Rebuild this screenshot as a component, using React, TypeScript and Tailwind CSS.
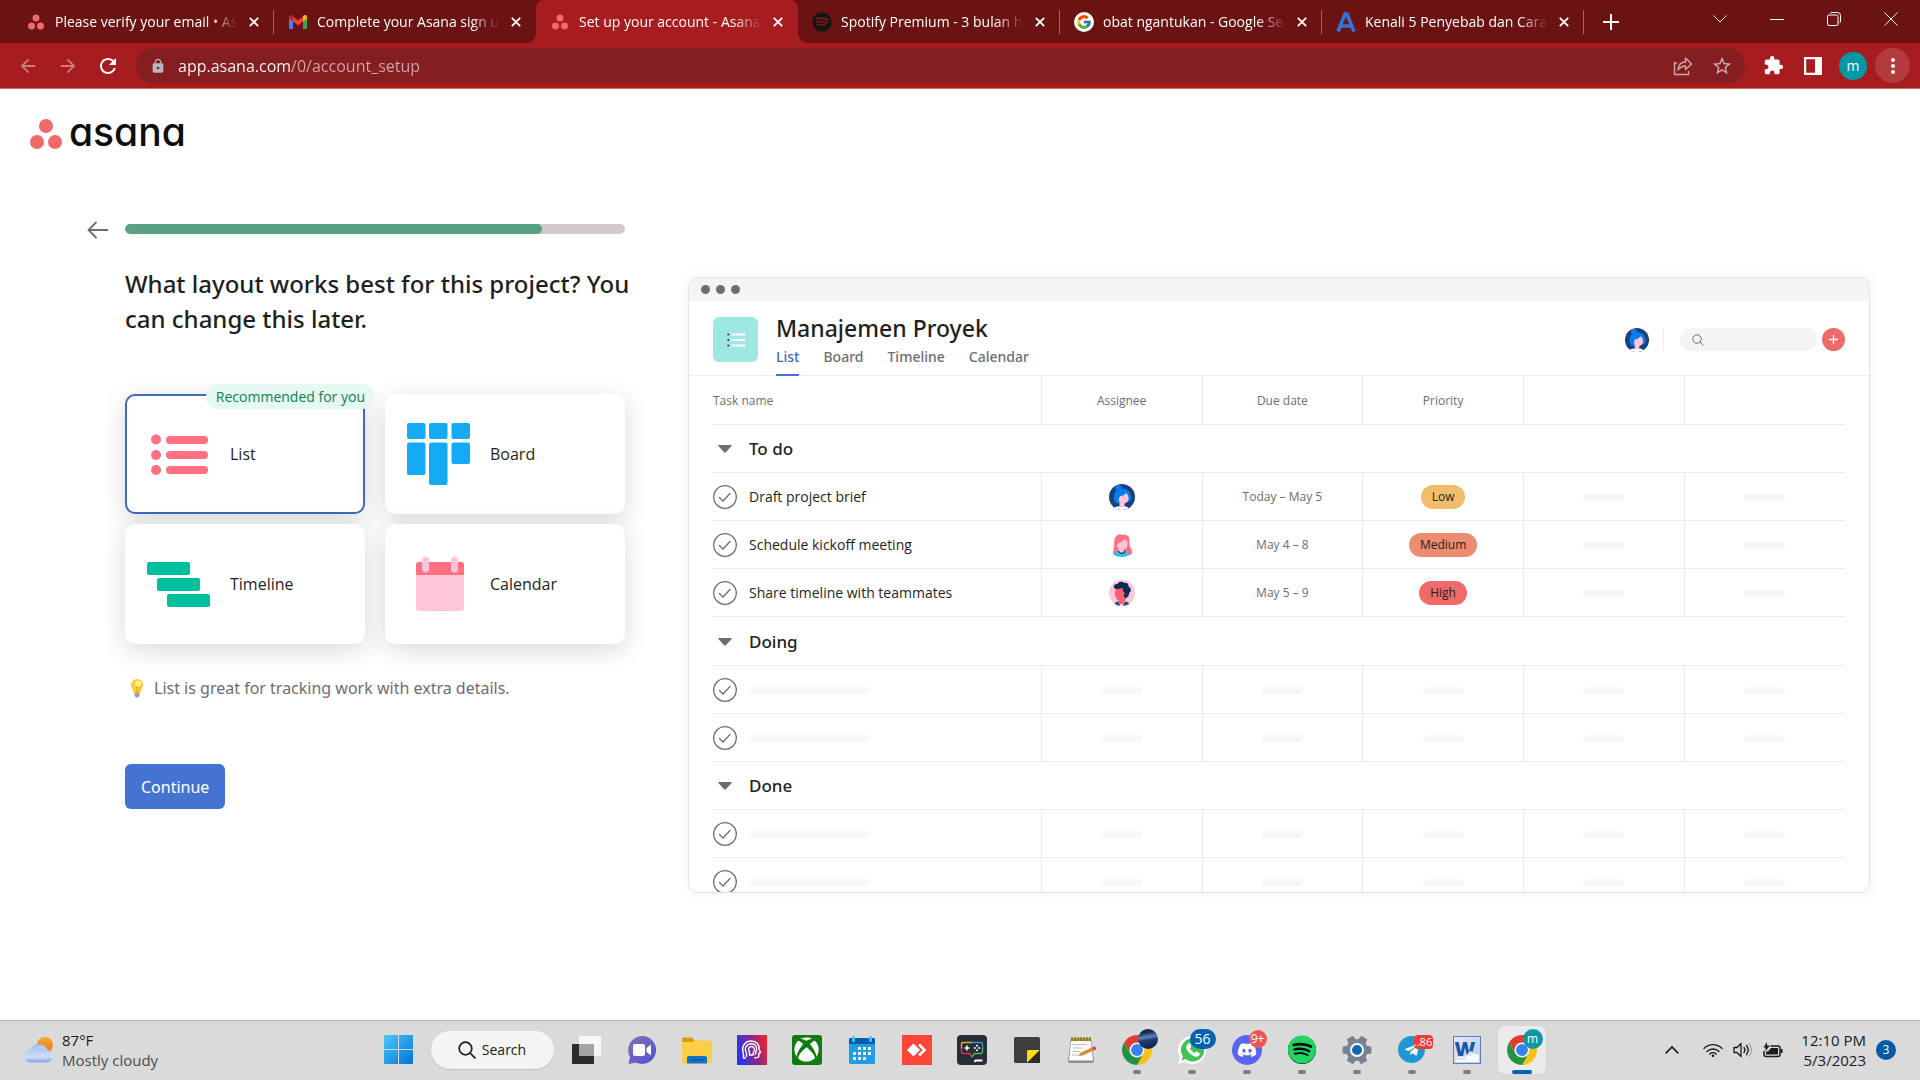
import { useState, type ReactNode } from "react";
import { FcGoogle } from "react-icons/fc";
import { FaDiscord, FaSpotify, FaTelegramPlane, FaXbox } from "react-icons/fa";
import { MdArrowBack, MdArrowForward, MdExtension, MdLock, MdMoreVert, MdRefresh, MdSettings, MdStarOutline } from "react-icons/md";

/* ---------- shared drawings ---------- */

function AsanaDots({ className }: { className: string }) {
  return (
    <svg viewBox="0 0 32 30" className={className} fill="#f06a6a" aria-hidden="true">
      <circle cx="16" cy="7" r="7" />
      <circle cx="7" cy="23" r="7" />
      <circle cx="25" cy="23" r="7" />
    </svg>
  );
}

function ChromeLogo() {
  return (
    <svg viewBox="0 0 48 48" className="size-[30px]" aria-hidden="true">
      <circle cx="24" cy="24" r="12" fill="#fff" />
      <path fill="#e33b2e" d="M24 12H44.78A24 24 0 0 0 3.22 12L13.6 30A12 12 0 0 1 24 12Z" />
      <path fill="#fbc116" d="M34.39 30L24 48A24 24 0 0 0 44.78 12H24A12 12 0 0 1 34.39 30Z" />
      <path fill="#229342" d="M13.6 30L3.22 12A24 24 0 0 0 24 48L34.39 30A12 12 0 0 1 13.6 30Z" />
      <circle cx="24" cy="24" r="9.5" fill="#3b7ff0" />
    </svg>
  );
}

function BlueAvatar({ className }: { className: string }) {
  return (
    <svg viewBox="0 0 26 26" className={className} aria-hidden="true">
      <clipPath id="blueAvatarClip">
        <circle cx="13" cy="13" r="13" />
      </clipPath>
      <g clipPath="url(#blueAvatarClip)">
        <rect width="26" height="26" fill="#17407c" />
        <circle cx="9.5" cy="4" r="3.2" fill="#0b7bea" />
        <path d="M5 14C4.500 8 8 4.500 13 4.500S21 7 22 12c1 2 .5 4-2 6l-8 1C7 20 5 18 5 14Z" fill="#0b7bea" />
        <path d="M11 12c2 .5 4.500-1 6-3 2 1.500 3 4 2.500 6.500-.4 2-2 3.500-4 4V24h-5v-6c-1-1.500-1-4 .5-5.500Z" fill="#ffc6da" />
        <path d="M4 26c0-2.500 3-3.500 6-3.800 2 1.500 4 1.500 6 0 2.500.3 4 1.500 4 3.800Z" fill="#fff" />
      </g>
    </svg>
  );
}

function RedAvatar() {
  return (
    <svg viewBox="0 0 26 26" className="size-[26px]" aria-hidden="true">
      <path d="M5 23C3 22 4.500 19 5 16 5.500 13 4.500 10 6 6c1.500-3.500 5-4.500 7-3 3-1 7 0 7.500 4 .4 3-.5 6 1 9 2 3 2.500 5 .5 6.500-2 1.500-5 .5-8 .5Z" fill="#ff7082" />
      <path d="M9 11c3-.5 5-2 6-4 2 .5 3.500 2 3.500 5 0 3-1.500 5-4 5.500v3h-5v-4C8 15 8 13 9 11Z" fill="#ffc6da" />
      <path d="M5 23c0-2.500 2-3.500 4.500-4 2 2.500 4.500 2.500 6 0 2.500.3 4 1.500 4.500 4-4 2.600-11 2.600-15 0Z" fill="#25c3f2" />
      <path d="M9.500 19c1.500 3.500 5 3.500 6.500 0" fill="none" stroke="#0d2e5c" strokeWidth="1.200" />
    </svg>
  );
}

function PinkAvatar() {
  return (
    <svg viewBox="0 0 26 26" className="size-[26px]" aria-hidden="true">
      <clipPath id="pinkAvatarClip">
        <circle cx="13" cy="13" r="13" />
      </clipPath>
      <g clipPath="url(#pinkAvatarClip)">
        <rect width="26" height="26" fill="#ffc6da" />
        <path d="M7 7c4 1 8 1 11 3l-1 8-1.500 3v3H9.500v-4c-2 0-2.500-1.500-2.500-3l-1.500-3Z" fill="#f8636b" />
        <path d="M5 8c-1-3 2-4.500 3.500-4C10 1 14 1.500 15 3c3-1 5 1.500 4.500 3.500C22.500 8 22.500 12 20 13c.5 3-2 5-4 5l-1.500-3c2-1 1-3-.5-3.500L13.500 8C10.500 9 7 9.500 5 8Z" fill="#0d2b57" />
        <path d="M5 26c0-3 2-4.500 4.500-4.500L11 26Zm9 0 2-4.500c3 0 4.500 2 4.500 4.500Z" fill="#1b4a8a" />
      </g>
    </svg>
  );
}

/* ---------- browser window ---------- */

function GmailIcon() {
  return (
    <svg viewBox="0 0 18 14" className="h-3.5 w-[18px]" aria-hidden="true">
      <path d="M0 2.500V13a1 1 0 0 0 1 1h3V5Z" fill="#4285f4" />
      <path d="M18 2.500V13a1 1 0 0 1-1 1h-3V5Z" fill="#34a853" />
      <path d="M4 1.500 9 5.500l5-4V6.500L9 10.500 4 6.500Z" fill="#ea4335" />
      <path d="M0 2C0 .3 2-.6 3.300.5L4 1v5.500L0 3.500Z" fill="#c5221f" />
      <path d="M18 2C18 .3 16-.6 14.700.5L14 1v5.500l4-3Z" fill="#fbbc04" />
    </svg>
  );
}

const tabs: { title: string; icon: ReactNode; active?: boolean; line?: boolean }[] = [
  { title: "Please verify your email • Asana", icon: <AsanaDots className="size-4" />, line: true },
  { title: "Complete your Asana sign up", icon: <GmailIcon /> },
  { title: "Set up your account - Asana", icon: <AsanaDots className="size-4" />, active: true },
  {
    title: "Spotify Premium - 3 bulan hanya",
    icon: (
      <span className="flex size-5 items-center justify-center rounded-full bg-[#7a1a1a] text-[#191414]">
        <FaSpotify className="size-5" />
      </span>
    ),
    line: true,
  },
  {
    title: "obat ngantukan - Google Search",
    icon: (
      <span className="flex size-5 items-center justify-center rounded-full bg-white">
        <FcGoogle className="size-4" />
      </span>
    ),
    line: true,
  },
  {
    title: "Kenali 5 Penyebab dan Cara",
    icon: (
      <svg viewBox="0 0 20 20" className="size-5" aria-hidden="true">
        <path d="M2 19.500 9 2h2l7 17.500M5 14h10" fill="none" stroke="#3571d8" strokeWidth="3.600" />
      </svg>
    ),
    line: true,
  },
];

function CloseGlyph() {
  return (
    <svg viewBox="0 0 10 10" className="size-2.5" stroke="currentColor" strokeWidth="1.800" aria-hidden="true">
      <path d="M.8.8l8.400 8.400M9.200.8.8 9.200" />
    </svg>
  );
}

function TabStrip() {
  return (
    <div className="flex h-[43px] items-stretch bg-[#6b1213] pl-3 text-white">
      {tabs.map((tab) => (
        <div
          key={tab.title}
          className={
            tab.active
              ? "relative flex w-[262px] min-w-0 items-center rounded-t-lg bg-[#a71c1e] pr-2.5 pl-3.5"
              : "relative flex w-[262px] min-w-0 items-center pr-2.5 pl-3.5"
          }
        >
          {tab.active && (
            <>
              <span className="absolute bottom-0 -left-2.5 size-2.5 bg-[radial-gradient(circle_at_0_0,transparent_10px,#a71c1e_10px)]" />
              <span className="absolute -right-2.5 bottom-0 size-2.5 bg-[radial-gradient(circle_at_100%_0,transparent_10px,#a71c1e_10px)]" />
            </>
          )}
          <button type="button" className="flex h-full min-w-0 flex-1 items-center gap-[9px] text-left">
            <span className="flex w-5 shrink-0 justify-center">{tab.icon}</span>
            <span className="mr-1.5 block min-w-0 flex-1 overflow-hidden text-sm whitespace-nowrap [mask-image:linear-gradient(to_right,black_84%,transparent)]">
              {tab.title}
            </span>
          </button>
          <button type="button" aria-label={"Close " + tab.title} className="flex size-5 shrink-0 items-center justify-center">
            <CloseGlyph />
          </button>
          {tab.line && <span className="absolute top-2.5 right-0 h-6 w-px bg-[#a56163]" />}
        </div>
      ))}
      <button type="button" aria-label="New tab" className="flex w-[54px] items-center justify-center">
        <svg viewBox="0 0 16 16" className="size-4" stroke="currentColor" strokeWidth="2" aria-hidden="true">
          <path d="M8 0v16M0 8h16" />
        </svg>
      </button>
      <div className="mr-px ml-auto flex h-[38px] [&>button]:flex [&>button]:w-[57px] [&>button]:items-center [&>button]:justify-center [&_svg]:size-3.5">
        <button type="button" aria-label="Search tabs">
          <svg viewBox="0 0 14 14" fill="none" stroke="currentColor" aria-hidden="true">
            <path d="M.5 3.500 7 10l6.500-6.500" />
          </svg>
        </button>
        <button type="button" aria-label="Minimize">
          <svg viewBox="0 0 14 14" stroke="currentColor" aria-hidden="true">
            <path d="M0 7.500h14" />
          </svg>
        </button>
        <button type="button" aria-label="Restore">
          <svg viewBox="0 0 14 14" fill="none" stroke="currentColor" aria-hidden="true">
            <rect x=".5" y="3" width="10.500" height="10.500" rx="1.500" />
            <path d="M3 1.500Q3.500.5 5 .5h5.500q3 0 3 3V9q0 1.500-1 2" />
          </svg>
        </button>
        <button type="button" aria-label="Close window">
          <svg viewBox="0 0 14 14" stroke="currentColor" aria-hidden="true">
            <path d="M.5.5l13 13M13.500.5l-13 13" />
          </svg>
        </button>
      </div>
    </div>
  );
}

function Toolbar() {
  return (
    <div className="flex h-[46px] items-center border-b border-[#c66a6b] bg-[#a71c1e] pr-2.5 pl-2 text-white">
      <button type="button" aria-label="Back" className="flex w-10 justify-center text-[#cf7d7e]">
        <MdArrowBack className="size-[22px]" />
      </button>
      <button type="button" aria-label="Forward" className="flex w-10 justify-center text-[#cf7d7e]">
        <MdArrowForward className="size-[22px]" />
      </button>
      <button type="button" aria-label="Reload" className="flex w-10 justify-center">
        <MdRefresh className="size-6" />
      </button>
      <div className="ml-2 flex h-[35px] min-w-0 flex-1 items-center rounded-full bg-[#841e20] pr-3 pl-3.5">
        <MdLock className="size-4 shrink-0 text-[#b4b9bf]" />
        <input
          type="text"
          aria-label="Address"
          defaultValue="app.asana.com/0/account_setup"
          className="ml-3 min-w-0 flex-1 bg-[linear-gradient(to_right,#ffffff_114px,#d7a5a6_114px)] bg-clip-text text-base text-transparent outline-none"
        />
        <button type="button" aria-label="Share this page" className="flex w-10 justify-center text-[#cfa9aa]">
          <svg viewBox="0 0 20 20" className="size-5" fill="none" stroke="currentColor" strokeWidth="1.400" aria-hidden="true">
            <path d="M4 7H1.500v11.500h14V15" />
            <path d="M5 14c.5-5 3-8 7.500-8V2l6 6-6 5.500V10c-3.500 0-5.500 1.500-7.500 4Z" strokeLinejoin="round" />
          </svg>
        </button>
        <button type="button" aria-label="Bookmark this tab" className="flex w-[30px] justify-end text-[#cfa9aa]">
          <MdStarOutline className="size-[22px]" />
        </button>
      </div>
      <button type="button" aria-label="Extensions" className="ml-2 flex w-10 justify-center">
        <MdExtension className="size-[21px]" />
      </button>
      <button type="button" aria-label="Side panel" className="flex w-10 justify-center">
        <svg viewBox="0 0 18 18" className="size-[18px]" fill="none" stroke="currentColor" strokeWidth="2.200" aria-hidden="true">
          <path d="M1.100 1.100h15.800v15.800H1.100Z" />
          <path d="M13.500 1v16" strokeWidth="5" />
        </svg>
      </button>
      <button type="button" aria-label="Profile" className="mx-1.5 flex size-7 items-center justify-center rounded-full bg-[#0097a7] text-sm leading-none">
        m
      </button>
      <button type="button" aria-label="Menu" className="ml-0.5 flex size-[35px] items-center justify-center rounded-full bg-[#b23b3d]">
        <MdMoreVert className="size-6" />
      </button>
    </div>
  );
}

/* ---------- layout picker ---------- */

const layouts: { name: string; icon: ReactNode }[] = [
  {
    name: "List",
    icon: (
      <g fill="#ff7082">
        <circle cx="9" cy="17.500" r="5" />
        <rect x="19" y="14" width="42" height="8" rx="4" />
        <circle cx="9" cy="33" r="5" />
        <rect x="19" y="29" width="42" height="8" rx="4" />
        <circle cx="9" cy="48" r="5" />
        <rect x="19" y="44" width="42" height="8" rx="4" />
      </g>
    ),
  },
  {
    name: "Board",
    icon: (
      <g fill="#14aaf5">
        <rect x="0" y="1" width="18.500" height="16" rx="2" />
        <rect x="22" y="1" width="18.500" height="16" rx="2" />
        <rect x="44.500" y="1" width="18.500" height="16" rx="2" />
        <rect x="0" y="20.500" width="18.500" height="32.500" rx="2" />
        <rect x="22" y="20.500" width="18.500" height="42.500" rx="2" />
        <rect x="44.500" y="20.500" width="18.500" height="21.500" rx="2" />
      </g>
    ),
  },
  {
    name: "Timeline",
    icon: (
      <g fill="#00bf9c">
        <rect x="0" y="10" width="43" height="13" rx="2" />
        <rect x="10" y="26" width="43" height="13" rx="2" />
        <rect x="20" y="42" width="43" height="13" rx="2" />
      </g>
    ),
  },
  {
    name: "Calendar",
    icon: (
      <>
        <rect x="9" y="10" width="48" height="49" rx="3" fill="#ffc6da" />
        <path d="M9 23V13q0-3 3-3h42q3 0 3 3v10Z" fill="#ff7082" />
        <rect x="15" y="4.500" width="7" height="16" rx="3.500" fill="#ffc6da" />
        <rect x="44" y="4.500" width="7" height="16" rx="3.500" fill="#ffc6da" />
      </>
    ),
  },
];

function LayoutPicker() {
  const [selected, setSelected] = useState("List");
  return (
    <section className="relative w-[500px] shrink-0">
      <button type="button" aria-label="Back" className="absolute -top-[5px] -left-[38px] text-[#6d6e6f]">
        <svg viewBox="0 0 22 22" className="size-[22px]" fill="none" stroke="currentColor" strokeWidth="1.800" aria-hidden="true">
          <path d="M20.500 11H2M9 3.500 1.500 11 9 18.500" strokeLinecap="round" />
        </svg>
      </button>
      <div role="progressbar" aria-label="Setup progress" aria-valuenow={83} aria-valuemin={0} aria-valuemax={100} className="h-2.5 overflow-hidden rounded-full bg-[#cfcbcb]">
        <div className="h-full w-5/6 rounded-full bg-[#58a182]" />
      </div>
      <h1 className="mt-8 font-['Noto_Sans'] text-2xl leading-[35px] font-medium whitespace-nowrap text-[#1e1f21]">
        What layout works best for this project? You
        <br />
        can change this later.
      </h1>
      <fieldset className="mt-[58px] grid grid-cols-2 gap-x-5 gap-y-2.5">
        <legend className="sr-only">Project layout</legend>
        {layouts.map((layout) => (
          <label
            key={layout.name}
            className={
              selected === layout.name
                ? "relative flex h-[120px] cursor-pointer items-center gap-[19px] rounded-[10px] border-2 border-[#4069bf] bg-white pl-5 shadow-[0_6px_24px_rgba(21,27,38,0.16)]"
                : "relative flex h-[120px] cursor-pointer items-center gap-[19px] rounded-[10px] border-2 border-transparent bg-white bg-clip-border pl-5 shadow-[0_6px_24px_rgba(21,27,38,0.16)]"
            }
          >
            <input
              type="radio"
              name="layout"
              className="sr-only"
              checked={selected === layout.name}
              onChange={() => setSelected(layout.name)}
            />
            <svg viewBox="0 0 64 64" className="size-16" aria-hidden="true">
              {layout.icon}
            </svg>
            <span className="text-base text-[#1e1f21]">{layout.name}</span>
            {layout.name === "List" && (
              <span className="absolute -top-3 -right-3 z-10 flex h-[25px] items-center rounded-full bg-[#e6f8f2] px-2.5 text-sm whitespace-nowrap text-[#0d7f56]">
                Recommended for you
              </span>
            )}
          </label>
        ))}
      </fieldset>
      <p className="mt-8 flex h-6 items-center gap-[9px] pl-1 text-base text-[#6d6e6f]">
        <svg viewBox="0 0 16 20" className="h-5 w-4" aria-hidden="true">
          <path d="M8 1a6 6 0 0 1 6 6c0 3-2 4.500-3 8H5C4 11.500 2 10 2 7a6 6 0 0 1 6-6Z" fill="#fcc934" />
          <circle cx="9" cy="5.500" r="3" fill="#fff38a" />
          <path d="M8 8v7" stroke="#e8a010" />
          <path d="M5.500 15h5v3l-1.500 1.500H7L5.500 18Z" fill="#9b9fa3" />
        </svg>
        <span className="font-['Noto_Sans']">{selected} is great for tracking work with extra details.</span>
      </p>
      <button type="button" className="mt-16 h-[45px] rounded-md bg-[#4573d2] px-4 font-['Noto_Sans'] text-base text-white">
        Continue
      </button>
    </section>
  );
}

/* ---------- project preview ---------- */

function CheckCircle() {
  return (
    <svg viewBox="0 0 24 24" className="size-6 shrink-0" fill="none" stroke="#6d6e6f" strokeWidth="1.300" aria-hidden="true">
      <circle cx="12" cy="12" r="11.300" />
      <path d="M6.500 12.500 10 16l7-7.500" strokeLinecap="round" />
    </svg>
  );
}

function Bar() {
  return <span className="mx-auto block h-[7px] w-[41px] rounded-sm bg-[#f7f7f7]" />;
}

type Task = { name: string; avatar: ReactNode; due: string; priority: string; pill: string };

const sections: { name: string; rowClass: string; tasks: (Task | null)[] }[] = [
  {
    name: "To do",
    rowClass: "h-12 border-b border-[#ecebeb]",
    tasks: [
      { name: "Draft project brief", avatar: <BlueAvatar className="size-[26px]" />, due: "Today – May 5", priority: "Low", pill: "bg-[#f1bd6c]" },
      { name: "Schedule kickoff meeting", avatar: <RedAvatar />, due: "May 4 – 8", priority: "Medium", pill: "bg-[#ec8d71]" },
      { name: "Share timeline with teammates", avatar: <PinkAvatar />, due: "May 5 – 9", priority: "High", pill: "bg-[#f06a6a]" },
    ],
  },
  { name: "Doing", rowClass: "h-[49px] border-b border-[#ecebeb]", tasks: [null, null] },
  { name: "Done", rowClass: "h-12 border-b border-[#ecebeb]", tasks: [null, null] },
];

function TaskRow({ task }: { task: Task | null }) {
  return (
    <tr className="h-12 border-b border-[#ecebeb] [&>td]:pt-0.5">
      <td>
        <div className="flex items-center gap-3">
          <CheckCircle />
          {task ? (
            <span className="text-sm text-[#1e1f21]">{task.name}</span>
          ) : (
            <span className="h-[7px] w-[120px] rounded-sm bg-[#f7f7f7]" />
          )}
        </div>
      </td>
      <td className="border-l border-[#ecebeb]">
        {task ? <div className="flex justify-center">{task.avatar}</div> : <Bar />}
      </td>
      <td className="border-l border-[#ecebeb] text-center text-xs text-[#6d6e6f]">{task ? task.due : <Bar />}</td>
      <td className="border-l border-[#ecebeb]">
        {task ? (
          <div className="flex justify-center">
            <span className={"flex h-6 items-center rounded-full px-[11px] text-xs text-[#1e1f21] " + task.pill}>{task.priority}</span>
          </div>
        ) : (
          <Bar />
        )}
      </td>
      <td className="border-l border-[#ecebeb]">
        <Bar />
      </td>
      <td className="border-l border-[#ecebeb]">
        <Bar />
      </td>
    </tr>
  );
}

function Preview() {
  return (
    <section className="h-[616px] min-w-0 flex-1 overflow-hidden rounded-[10px] border border-[#e6e5e5] bg-white shadow-[0_0_16px_rgba(21,27,38,0.05)]">
      <div className="flex h-[23px] items-center gap-1.5 bg-[#f5f3f4] pl-3">
        <span className="size-[9px] rounded-full bg-[#6d6e6f]" />
        <span className="size-[9px] rounded-full bg-[#6d6e6f]" />
        <span className="size-[9px] rounded-full bg-[#6d6e6f]" />
      </div>
      <header className="flex h-[75px] items-start border-b border-[#efeeee] px-6 pt-4">
        <span className="flex size-[45px] items-center justify-center rounded-md bg-[#9ee7e3]">
          <svg viewBox="0 0 18 14" className="h-3.5 w-[18px]" aria-hidden="true">
            <g fill="#2a2b2d">
              <circle cx="1.300" cy="1.500" r="1" />
              <circle cx="1.300" cy="7" r="1" />
              <circle cx="1.300" cy="12.500" r="1" />
            </g>
            <path d="M5.500 1.500h12M5.500 7h12M5.500 12.500h12" stroke="#fff" strokeWidth="2.200" strokeLinecap="round" />
          </svg>
        </span>
        <div className="ml-[18px]">
          <h2 className="font-['Noto_Sans'] text-[23px] leading-[22px] font-medium text-[#1e1f21]">Manajemen Proyek</h2>
          <nav className="flex gap-6 font-['Noto_Sans'] text-sm leading-9 font-medium text-[#6d6e6f]">
            <a href="#list" className="h-[37px] border-b-2 border-[#4573d2] text-[#4069bf]">List</a>
            <a href="#board">Board</a>
            <a href="#timeline">Timeline</a>
            <a href="#calendar">Calendar</a>
          </nav>
        </div>
        <div className="mt-[11px] ml-auto flex h-[23px] items-center">
          <BlueAvatar className="size-6" />
          <span className="mr-4 ml-3.5 h-full w-px bg-[#efeeee]" />
          <label className="flex h-[23px] w-[137px] items-center rounded-full bg-[#f5f3f4] pl-3">
            <svg viewBox="0 0 12 12" className="size-3 shrink-0" fill="none" stroke="#6d6e6f" aria-hidden="true">
              <circle cx="5" cy="5" r="4.200" />
              <path d="m8 8 3.500 3.500" />
            </svg>
            <input type="search" aria-label="Search project" className="min-w-0 flex-1 bg-transparent text-xs outline-none" />
          </label>
          <button type="button" aria-label="Add" className="ml-[5px] flex size-[23px] items-center justify-center rounded-full bg-[#f06a6a] text-white">
            <svg viewBox="0 0 9 9" className="size-[9px]" stroke="currentColor" strokeWidth="1.300" aria-hidden="true">
              <path d="M4.500 0v9M0 4.500h9" />
            </svg>
          </button>
        </div>
      </header>
      <div className="px-6">
        <table className="w-full table-fixed border-collapse">
          <thead>
            <tr className="h-12 border-b border-[#ecebeb] text-xs text-[#6d6e6f] [&>th]:pt-0.5 [&>th]:font-normal [&>th+th]:border-l [&>th+th]:border-[#ecebeb]">
              <th scope="col" className="w-[29%] text-left">Task name</th>
              <th scope="col">Assignee</th>
              <th scope="col">Due date</th>
              <th scope="col">Priority</th>
              <th scope="col" aria-label="Empty column" />
              <th scope="col" aria-label="Empty column" />
            </tr>
          </thead>
          {sections.map((section) => (
            <tbody key={section.name}>
              <tr className={section.rowClass}>
                <th colSpan={6} scope="colgroup" className="pt-0.5 text-left">
                  <span className="flex items-center pl-[5px] font-['Noto_Sans'] text-[17px] font-medium text-[#1e1f21]">
                    <svg viewBox="0 0 14 8" className="mr-[17px] h-2 w-3.5" fill="#6d6e6f" aria-hidden="true">
                      <path d="M.8 0h12.400q1.200 0 .4 1L7.900 7.300q-.9.900-1.800 0L.4 1Q-.4 0 .8 0Z" />
                    </svg>
                    {section.name}
                  </span>
                </th>
              </tr>
              {section.tasks.map((task, i) => (
                <TaskRow key={i} task={task} />
              ))}
            </tbody>
          ))}
        </table>
      </div>
    </section>
  );
}

/* ---------- taskbar ---------- */

const apps: { name: string; icon: ReactNode; running?: boolean; active?: boolean; badge?: ReactNode }[] = [
  {
    name: "Task view",
    icon: (
      <svg viewBox="0 0 30 30" className="size-[30px]" aria-hidden="true">
        <rect x="0" y="9" width="22" height="20" rx="1" fill="#2b2b2b" />
        <rect x="7" y="1" width="22" height="20" rx="1" fill="#f7f7f7" />
        <rect x="7" y="9" width="15" height="12" fill="#a4a4a4" />
      </svg>
    ),
  },
  {
    name: "Chat",
    icon: (
      <svg viewBox="0 0 30 30" className="size-[30px]" aria-hidden="true">
        <linearGradient id="chatFill" x1="0" y1="0" x2="1" y2="1">
          <stop offset="0" stopColor="#8a6fb4" />
          <stop offset="1" stopColor="#4f52d3" />
        </linearGradient>
        <path d="M15 1a14 14 0 1 1-6 26.600L1.500 29 3 22A14 14 0 0 1 15 1Z" fill="url(#chatFill)" />
        <rect x="6" y="9" width="12" height="12" rx="2" fill="#fff" />
        <path d="m19.500 13 4.500-3.500v11L19.500 17Z" fill="#fff" />
      </svg>
    ),
  },
  {
    name: "File Explorer",
    icon: (
      <svg viewBox="0 0 30 30" className="size-[30px]" aria-hidden="true">
        <path d="M0 8V4q0-1.500 1.500-1.500H10L13 6v4H0Z" fill="#dc9c07" />
        <path d="M0 7h11l2.500-1.500H28.500q1.500 0 1.500 1.500v21.500H0Z" fill="#fdcf49" />
        <path d="M5 28.500V23q0-2 2-2h16q2 0 2 2v5.500Z" fill="#1273c4" />
        <path d="M9 25h12" stroke="#0a4f91" />
      </svg>
    ),
  },
  {
    name: "Mind",
    icon: (
      <svg viewBox="0 0 30 30" className="size-[30px]" aria-hidden="true">
        <linearGradient id="mindFill" x1="0" y1=".6" x2="1" y2=".3">
          <stop offset="0" stopColor="#2338f2" />
          <stop offset=".5" stopColor="#7c2796" />
          <stop offset="1" stopColor="#f02233" />
        </linearGradient>
        <rect width="30" height="30" fill="url(#mindFill)" />
        <g fill="none" stroke="#fff" strokeWidth="1.400" strokeLinejoin="round">
          <path d="M9 23H6.500v-3.500C4 12 7.500 6 14 6c5.500 0 8.500 3.500 8 8l1.500 3.500-1.700.8V21q0 2-4.500 1.700" />
          <path d="M9.500 22v-4C6.500 13 10 8.700 14.500 8.700c4 0 5.500 3 5 6.300-.5 2.500-1 3.500-1.500 5" />
          <path d="M12.500 20v-3c-2-3-.5-5.500 2-5.500s3.500 2.500 2.500 4.500c-.7 1.300-1 2-1 4Z" />
        </g>
      </svg>
    ),
  },
  {
    name: "Xbox",
    icon: (
      <span className="flex size-[30px] items-center justify-center rounded-[3px] bg-[#107c10] text-white">
        <FaXbox className="size-[25px]" />
      </span>
    ),
  },
  {
    name: "Calendar",
    icon: (
      <svg viewBox="0 0 26 28" className="h-7 w-[26px]" aria-hidden="true">
        <rect y="2" width="26" height="26" rx="1.500" fill="#1f9de8" />
        <path d="M0 8V3.500Q0 2 1.500 2h23Q26 2 26 3.500V8Z" fill="#0b5cad" />
        <rect x="3" width="3" height="6" rx="1.500" fill="#35c6f4" />
        <rect x="20" width="3" height="6" rx="1.500" fill="#35c6f4" />
        <g fill="#fff">
          <path d="M9 11h3v3H9zM14 11h3v3h-3zM19 11h3v3h-3zM4 16h3v3H4zM9 16h3v3H9zM14 16h3v3h-3zM19 16h3v3h-3zM4 21h3v3H4zM9 21h3v3H9zM14 21h3v3h-3z" />
        </g>
      </svg>
    ),
  },
  {
    name: "AnyDesk",
    icon: (
      <svg viewBox="0 0 30 30" className="size-[30px]" aria-hidden="true">
        <rect width="30" height="30" fill="#ff4438" />
        <path d="m5 15 6.500-6.500L18 15l-6.500 6.500Z" fill="#fff" />
        <path d="m17 9.500 5.500 5.500-5.500 5.500" fill="none" stroke="#fff" strokeWidth="2.600" />
      </svg>
    ),
  },
  {
    name: "Game center",
    icon: (
      <svg viewBox="0 0 30 30" className="size-[30px]" fill="none" aria-hidden="true">
        <rect width="30" height="30" rx="4" fill="#262c38" />
        <path d="M15 7.500H6q-1.500 0-1.500 1.500v5" stroke="#e3b02b" strokeWidth="1.400" />
        <path d="M15 7.500h9q1.500 0 1.500 1.500v5" stroke="#3d8bd8" strokeWidth="1.400" />
        <path d="M4.500 13v4q0 1.500 1.500 1.500h6.500L15 22" stroke="#e0314a" strokeWidth="1.400" />
        <path d="M25.500 13v4q0 1.500-1.500 1.500h-6.500L15 22" stroke="#3fbf4e" strokeWidth="1.400" />
        <path d="M10 10.500v5M7.500 13h5" stroke="#fff" strokeWidth="1.600" />
        <g fill="#fff">
          <circle cx="20" cy="10.800" r="1" />
          <circle cx="20" cy="15.200" r="1" />
          <circle cx="17.800" cy="13" r="1" />
          <circle cx="22.200" cy="13" r="1" />
        </g>
        <path d="M17.500 27 18.500 25.500h7" stroke="#fff" strokeWidth="1.800" />
      </svg>
    ),
  },
  {
    name: "Sticky Notes",
    icon: (
      <svg viewBox="0 0 26 26" className="size-[26px]" aria-hidden="true">
        <rect width="26" height="26" rx="1.500" fill="#3d3d3d" />
        <path d="M13 26V14.500q0-1.500 1.500-1.500H26Z" fill="#ffd90a" />
        <path d="M13 26 26 13v13Z" fill="#2b2b2b" />
      </svg>
    ),
  },
  {
    name: "Notepad",
    icon: (
      <svg viewBox="0 0 30 28" className="h-7 w-[30px]" aria-hidden="true">
        <path d="M4 2h20l3 23q0 2-2 2H3q-2 0-2-2Z" fill="#8d9195" />
        <path d="M4.500 2h19L26 24.500H2Z" fill="#fbfbfa" />
        <path d="M4 2h20v3H4Z" fill="#c2a32b" />
        <path d="M5 1v4M8 1v4M11 1v4M14 1v4M17 1v4M20 1v4M23 1v4" stroke="#5c5220" />
        <path d="M6 8.500h14M6 12h10M5.500 15.500h8M5 19h6" stroke="#b9bdc2" strokeWidth="1.200" />
        <path d="m11 20 3-3.500 11-5 1.500 3-11 5Z" fill="#d98a36" />
        <path d="m25 11.500 3-1.300 1.500 3-3 1.300Z" fill="#d8403b" />
      </svg>
    ),
  },
  {
    name: "Chrome",
    icon: <ChromeLogo />,
    running: true,
    badge: (
      <span className="absolute top-[3px] right-[3px] size-5 rounded-full bg-[linear-gradient(170deg,#16284e_20%,#5a86b8_42%,#1c3f73_55%,#0d1a38)]" />
    ),
  },
  {
    name: "WhatsApp",
    icon: (
      <svg viewBox="0 0 30 30" className="size-[30px]" aria-hidden="true">
        <path d="M15.500 1A14 14 0 1 1 8 27L1 29l2-7A14 14 0 0 1 15.500 1Z" fill="#fff" />
        <path d="M15.500 3.500A11.500 11.500 0 1 1 8.500 24L4.500 25.500 6 21.500A11.500 11.500 0 0 1 15.500 3.500Z" fill="#3fc351" />
        <path d="M11 8.500q1.500-1 2.200.5l1 2.500q.2.800-1.200 2.200 1.500 3 4.500 4.300 1.500-1.800 2.200-1.500l2.500 1.200q1 .6.300 2.300c-1.500 2.500-5 2-8-.2-4-3-6-6.500-5-9.300Z" fill="#fff" />
      </svg>
    ),
    running: true,
    badge: <span className="absolute top-[3px] right-0 flex h-5 w-[26px] items-center justify-center rounded-full bg-[#0063b1] text-sm leading-none text-white">56</span>,
  },
  {
    name: "Discord",
    icon: (
      <span className="flex size-[30px] items-center justify-center rounded-full bg-[#5865f2] text-white">
        <FaDiscord className="size-5" />
      </span>
    ),
    running: true,
    badge: <span className="absolute top-1 right-1 flex size-[18px] items-center justify-center rounded-full bg-[#ef5555] text-xs leading-none text-white">9+</span>,
  },
  {
    name: "Spotify",
    icon: (
      <span className="flex size-7 items-center justify-center rounded-full bg-black text-[#1ed760]">
        <FaSpotify className="size-[29px]" />
      </span>
    ),
    running: true,
  },
  {
    name: "Settings",
    icon: (
      <span className="relative flex size-8 items-center justify-center text-[#75828f]">
        <MdSettings className="size-9 shrink-0 rotate-90" />
        <span className="absolute top-[9px] left-[9px] size-3.5 rounded-full border-2 border-white bg-[#0f66b8]" />
      </span>
    ),
    running: true,
  },
  {
    name: "Telegram",
    icon: (
      <span className="flex size-[27px] items-center justify-center rounded-full bg-[#1f97d4] text-white">
        <FaTelegramPlane className="size-4" />
      </span>
    ),
    running: true,
    badge: <span className="absolute top-[9px] right-[3px] flex h-3.5 w-[19px] items-center justify-center rounded-sm bg-[#f23b35] text-[11px] leading-none text-white">..86</span>,
  },
  {
    name: "Word",
    icon: (
      <span className="relative flex size-7 items-start justify-start border border-[#5a7fb5] bg-[linear-gradient(135deg,#dfeafa,#b4cbec)] pl-px text-xl leading-6 font-extrabold text-[#1d55a8]">
        W
        <svg viewBox="0 0 26 26" className="absolute inset-0 size-[26px]" aria-hidden="true">
          <path d="M2 20h9l5-6 9 3v8H2Z" fill="#fff" fillOpacity=".85" />
          <path d="m17 15 8 2.500M2 22h10" stroke="#b9cce8" />
        </svg>
      </span>
    ),
    running: true,
  },
  {
    name: "Chrome profile m",
    icon: <ChromeLogo />,
    active: true,
    badge: <span className="absolute top-[3px] right-[3px] flex size-5 items-center justify-center rounded-full bg-[#0e97a4] text-xs leading-none text-white">m</span>,
  },
];

function Taskbar() {
  return (
    <footer className="flex h-[60px] items-center border-t border-[#adadad] bg-[#dadada] pb-0.5 text-sm leading-5 text-[#1b1b1b]">
      <div className="min-w-0 flex-1 pl-6">
        <button type="button" className="flex items-center gap-2 text-left text-[15px] leading-5">
          <svg viewBox="0 0 30 26" className="h-[26px] w-[30px]" aria-hidden="true">
            <linearGradient id="sunFill" x1="0" y1="0" x2="0" y2="1">
              <stop offset="0" stopColor="#f0ab2c" />
              <stop offset="1" stopColor="#f0731a" />
            </linearGradient>
            <linearGradient id="cloudFill" x1="0" y1="0" x2="0" y2="1">
              <stop offset="0" stopColor="#9dbcee" />
              <stop offset=".7" stopColor="#cfe0fa" />
              <stop offset="1" stopColor="#7fa1e6" />
            </linearGradient>
            <circle cx="21" cy="8" r="8" fill="url(#sunFill)" />
            <path d="M7 25.500a6.500 6.500 0 0 1-.8-13A9 9 0 0 1 23 13a6.300 6.300 0 0 1 .5 12.500Z" fill="url(#cloudFill)" />
            <path d="M12 19a6 6 0 0 1 11-6" fill="none" stroke="#b9d0f6" strokeWidth="1.500" />
          </svg>
          <span className="block">
            <span className="block">87°F</span>
            <span className="block text-[#4d4d4d]">Mostly cloudy</span>
          </span>
        </button>
      </div>
      <nav aria-label="Apps" className="flex items-center">
        <button type="button" aria-label="Start" className="flex size-12 items-center justify-center">
          <svg viewBox="0 0 29 29" className="size-[29px]" aria-hidden="true">
            <linearGradient id="startFill" x1="0" y1="0" x2="1" y2="1">
              <stop offset="0" stopColor="#4cc9fb" />
              <stop offset="1" stopColor="#0273d4" />
            </linearGradient>
            <path d="M0 1q0-1 1-1h13v14H0ZM15 0h13q1 0 1 1v13H15ZM0 15h14v14H1q-1 0-1-1ZM15 15h14v13q0 1-1 1H15Z" fill="url(#startFill)" />
          </svg>
        </button>
        <button type="button" className="mr-[9px] ml-2 flex h-[38px] w-[123px] items-center justify-center gap-1.5 rounded-full bg-[#f4f4f4] shadow-[0_1px_1px_rgba(0,0,0,0.12)]">
          <svg viewBox="0 0 18 18" className="size-[18px]" fill="none" stroke="currentColor" strokeWidth="1.700" aria-hidden="true">
            <circle cx="7.500" cy="7.500" r="6.300" />
            <path d="m12 12 5.500 5.500" />
          </svg>
          Search
        </button>
        <div className="flex gap-[7px]">
          {apps.map((app) => (
            <button
              key={app.name}
              type="button"
              aria-label={app.name}
              className={
                app.active
                  ? "relative flex size-12 items-center justify-center rounded-md bg-[#ebebeb] shadow-[0_0_1px_rgba(0,0,0,0.2)]"
                  : "relative flex size-12 items-center justify-center"
              }
            >
              {app.icon}
              {app.badge}
              {app.running && <span className="absolute bottom-0 left-5 h-1 w-2 rounded-full bg-[#7c7c7c]" />}
              {app.active && <span className="absolute bottom-0 left-3.5 h-1 w-5 rounded-full bg-[#0063b1]" />}
            </button>
          ))}
        </div>
      </nav>
      <div className="flex min-w-0 flex-1 items-center justify-end pr-6">
        <button type="button" aria-label="Show hidden icons" className="mr-6">
          <svg viewBox="0 0 14 8" className="h-2 w-3.5" fill="none" stroke="currentColor" strokeWidth="1.700" aria-hidden="true">
            <path d="m.7 7.300 6.300-6.300 6.300 6.300" />
          </svg>
        </button>
        <button type="button" aria-label="Network, sound and battery" className="mr-[18px] flex items-center gap-2.5">
          <svg viewBox="0 0 20 16" className="h-4 w-5" fill="none" stroke="currentColor" strokeWidth="1.300" strokeLinecap="round" aria-hidden="true">
            <path d="M1 6.500a12.500 12.500 0 0 1 18 0M4 9.500a8.400 8.400 0 0 1 12 0M6.800 12a4.600 4.600 0 0 1 6.400 0" />
            <circle cx="10" cy="13.800" r="1.300" fill="currentColor" stroke="none" />
          </svg>
          <svg viewBox="0 0 20 16" className="h-4 w-5" fill="none" stroke="currentColor" strokeWidth="1.300" strokeLinecap="round" strokeLinejoin="round" aria-hidden="true">
            <path d="M1 5.500h3L8 1.500v13l-4-4H1ZM11 5.500q2 2.500 0 5M13.500 3.500q3.500 4.500 0 9" />
            <path d="M16 1.500q5 6.500 0 13" stroke="#a8a8a8" />
          </svg>
          <svg viewBox="0 0 20 16" className="h-4 w-5" fill="none" stroke="currentColor" strokeWidth="1.500" aria-hidden="true">
            <path d="M7.500 4H15q2 0 2 2v6.500q0 2-2 2H3q-2 0-2-2V9" />
            <path d="M8 6h7v6.500H3V9.500h2Z" fill="currentColor" stroke="none" />
            <path d="M18.500 7v4" strokeWidth="2" />
            <path d="M4 0v3.500h3L2.500 9V5.500H.5Z" fill="currentColor" stroke="none" />
          </svg>
        </button>
        <button type="button" className="mr-2.5 text-right text-[15px] leading-5 whitespace-nowrap">
          <span className="block">12:10 PM</span>
          <span className="block">5/3/2023</span>
        </button>
        <button type="button" aria-label="3 notifications" className="flex size-5 shrink-0 items-center justify-center rounded-full bg-[#005ba4] text-xs leading-none text-white">
          3
        </button>
      </div>
    </footer>
  );
}

export default function App() {
  return (
    <div className="flex min-h-screen flex-col bg-white font-['Open_Sans','Noto_Sans',sans-serif]">
      <TabStrip />
      <Toolbar />
      <main className="flex-1">
        <a href="#home" aria-label="asana" className="mt-[21px] ml-[30px] flex h-12 w-fit items-center gap-[7px]">
          <AsanaDots className="h-[30px] w-8" />
          <span className="-mt-1.5 font-[Inter] text-[39px] leading-none font-medium text-[#0d0e10] [font-feature-settings:'cv11']">asana</span>
        </a>
        <div className="mt-[66px] flex pr-[50px] pl-[125px]">
          <LayoutPicker />
          <div className="mt-[53px] ml-[63px] flex min-w-0 flex-1 items-start">
            <Preview />
          </div>
        </div>
      </main>
      <Taskbar />
    </div>
  );
}
